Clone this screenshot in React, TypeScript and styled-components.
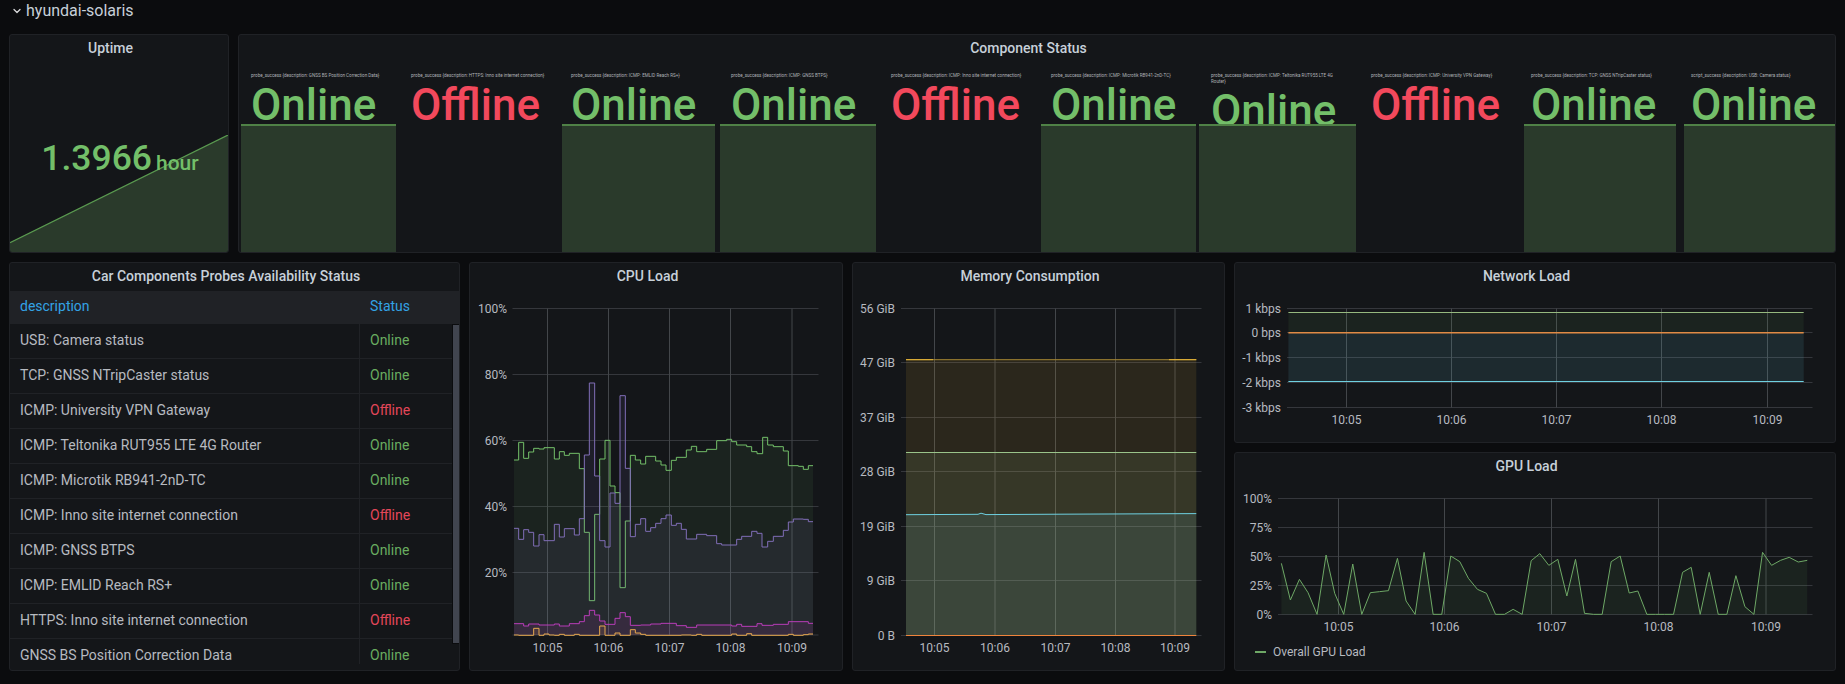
import React from "react";
import styled, { createGlobalStyle } from "styled-components";
import { ChevronDown } from "lucide-react";

type Point = [number, number];

type Series = {
  points: Point[];
  color: string;
  fill?: string;
  fillOpacity?: number;
  base?: number;
  step?: boolean;
  width?: number;
};

type Tick = { label: string; at: number };

type Box = { x: number; y: number; w: number; h: number };

const scaleCpu = (p: Point): Point => [465 + p[0] / 3, 255 + Math.min(p[1], 1141) / 3];
const scaleGpu = (p: Point): Point => [1230 + p[0] / 2.55, 450 + p[1] / 3];

const tiles = [
  { title: "probe_success {description: GNSS BS Position Correction Data}", up: true, barLeft: 0, barWidth: 155 },
  { title: "probe_success {description: HTTPS: Inno site internet connection}", up: false, barLeft: 0, barWidth: 0 },
  { title: "probe_success {description: ICMP: EMLID Reach RS+}", up: true, barLeft: 1, barWidth: 153 },
  { title: "probe_success {description: ICMP: GNSS BTPS}", up: true, barLeft: -1, barWidth: 156 },
  { title: "probe_success {description: ICMP: Inno site internet connection}", up: false, barLeft: 0, barWidth: 0 },
  { title: "probe_success {description: ICMP: Microtik RB941-2nD-TC}", up: true, barLeft: 0, barWidth: 155 },
  { title: "probe_success {description: ICMP: Teltonika RUT955 LTE 4G\nRouter}", up: true, barLeft: -2, barWidth: 157 },
  { title: "probe_success {description: ICMP: University VPN Gateway}", up: false, barLeft: 0, barWidth: 0 },
  { title: "probe_success {description: TCP: GNSS NTripCaster status}", up: true, barLeft: 3, barWidth: 152 },
  { title: "script_success {description: USB: Camera status}", up: true, barLeft: 3, barWidth: 152 },
];

const probes = [
  { name: "USB: Camera status", up: true },
  { name: "TCP: GNSS NTripCaster status", up: true },
  { name: "ICMP: University VPN Gateway", up: false },
  { name: "ICMP: Teltonika RUT955 LTE 4G Router", up: true },
  { name: "ICMP: Microtik RB941-2nD-TC", up: true },
  { name: "ICMP: Inno site internet connection", up: false },
  { name: "ICMP: GNSS BTPS", up: true },
  { name: "ICMP: EMLID Reach RS+", up: true },
  { name: "HTTPS: Inno site internet connection", up: false },
  { name: "GNSS BS Position Correction Data", up: true },
];

const cpuGreen: Point[] = [
  [147, 615], [161, 562], [176, 610], [191, 591], [206, 580], [222, 582], [237, 578], [268, 612], [283, 590], [298, 601],
  [313, 595], [343, 641], [358, 832], [373, 1037], [389, 778], [404, 612], [420, 556], [435, 693], [450, 713], [465, 998],
  [481, 798], [496, 601], [511, 615], [527, 627], [542, 604], [572, 618], [588, 630], [603, 646], [619, 616], [634, 607],
  [664, 585], [679, 574], [695, 590], [725, 583], [755, 557], [785, 553], [800, 560], [815, 570], [845, 575], [860, 590],
  [876, 596], [893, 547], [908, 570], [925, 575], [955, 588], [970, 632], [1000, 634], [1015, 643], [1030, 632], [1044, 632],
];

const cpuPurple: Point[] = [
  [147, 820], [161, 853], [176, 824], [191, 832], [206, 873], [222, 839], [237, 857], [268, 808], [283, 846], [298, 821],
  [328, 840], [343, 791], [358, 600], [373, 384], [389, 663], [404, 857], [420, 876], [435, 714], [450, 745], [465, 422],
  [481, 640], [496, 845], [511, 808], [527, 791], [542, 829], [557, 818], [572, 805], [588, 791], [603, 780], [619, 811],
  [634, 805], [649, 823], [664, 852], [695, 838], [725, 842], [755, 866], [770, 870], [815, 853], [830, 844], [860, 829],
  [876, 835], [891, 876], [908, 859], [925, 844], [955, 826], [970, 801], [985, 792], [1015, 793], [1030, 800], [1044, 800],
];

const cpuMagenta: Point[] = [
  [147, 1106], [176, 1113], [191, 1107], [222, 1110], [268, 1107], [283, 1113], [313, 1106], [343, 1100], [358, 1082],
  [373, 1066], [389, 1080], [404, 1098], [420, 1108], [450, 1090], [465, 1073], [481, 1085], [496, 1111], [527, 1110],
  [557, 1107], [588, 1105], [634, 1112], [664, 1117], [695, 1110], [800, 1113], [815, 1108], [830, 1114], [876, 1106],
  [891, 1111], [925, 1108], [970, 1100], [1030, 1105], [1044, 1105],
];

const cpuOrange: Point[] = [
  [147, 1140], [161, 1145], [206, 1120], [222, 1145], [237, 1137], [252, 1140], [268, 1145], [283, 1138], [298, 1145],
  [328, 1138], [343, 1145], [404, 1113], [420, 1145], [450, 1134], [465, 1145], [496, 1124], [511, 1134], [527, 1138],
  [542, 1145], [649, 1140], [679, 1145], [695, 1138], [710, 1145], [800, 1137], [815, 1145], [845, 1136], [860, 1145],
  [970, 1138], [985, 1145], [1015, 1139], [1030, 1137], [1044, 1137],
];

const gpuLoad: Point[] = [
  [131, 340], [154, 450], [177, 388], [199, 428], [222, 493], [245, 315], [267, 430], [290, 493], [313, 342], [336, 493],
  [358, 428], [381, 425], [404, 422], [427, 325], [449, 453], [472, 493], [495, 307], [518, 493], [540, 493], [563, 318],
  [586, 335], [608, 385], [631, 418], [654, 430], [677, 493], [700, 493], [722, 478], [745, 493], [768, 332], [790, 311],
  [813, 346], [836, 328], [859, 438], [881, 328], [904, 490], [927, 493], [949, 493], [972, 335], [995, 318], [1018, 429],
  [1040, 423], [1063, 493], [1085, 493], [1108, 493], [1131, 493], [1154, 367], [1176, 352], [1199, 493], [1222, 367],
  [1245, 493], [1267, 493], [1290, 377], [1313, 470], [1336, 493], [1358, 307], [1381, 346], [1404, 331], [1426, 322],
  [1449, 336], [1472, 331],
];

function linePath(s: Series) {
  const pts = s.points;
  if (!s.step) return pts.map((p, i) => `${i ? "L" : "M"}${p[0]} ${p[1]}`).join(" ");
  let d = `M${pts[0][0]} ${pts[0][1]}`;
  for (let i = 1; i < pts.length; i++) d += ` H${pts[i][0]} V${pts[i][1]}`;
  return d;
}

function Chart(props: {
  box: Box;
  yTicks: Tick[];
  xTicks: Tick[];
  gridLeft: number;
  gridRight: number;
  labelRight: number;
  xLabelY: number;
  series: Series[];
}) {
  const { box, yTicks, xTicks, gridLeft, gridRight, labelRight, xLabelY, series } = props;
  const top = yTicks[0].at;
  const bottom = yTicks[yTicks.length - 1].at;
  return (
    <ChartSvg width={box.w} height={box.h} viewBox={`${box.x} ${box.y} ${box.w} ${box.h}`}>
      {yTicks.map(t => (
        <g key={t.label}>
          <HorizontalLine x1={gridLeft} x2={gridRight} y1={t.at} y2={t.at} />
          <AxisLabel x={labelRight} y={t.at + 4} textAnchor="end">
            {t.label}
          </AxisLabel>
        </g>
      ))}
      {xTicks.map(t => (
        <g key={t.label}>
          <VerticalLine x1={t.at} x2={t.at} y1={top} y2={bottom} />
          <AxisLabel x={t.at} y={xLabelY} textAnchor="middle">
            {t.label}
          </AxisLabel>
        </g>
      ))}
      {series.map((s, i) => {
        const first = s.points[0];
        const last = s.points[s.points.length - 1];
        const d = linePath(s);
        return (
          <g key={i}>
            {s.fillOpacity && (
              <path
                d={`${d} L${last[0]} ${s.base} L${first[0]} ${s.base} Z`}
                fill={s.fill || s.color}
                fillOpacity={s.fillOpacity}
              />
            )}
            <path d={d} fill="none" stroke={s.color} strokeWidth={s.width || 1} />
          </g>
        );
      })}
    </ChartSvg>
  );
}

function App() {
  return (
    <>
      <GlobalStyle />
      <Page>
        <RowHeader>
          <ChevronDown size={12} strokeWidth={2.6} />
          <RowTitle>hyundai-solaris</RowTitle>
        </RowHeader>
        <TopRow>
          <Panel>
            <PanelTitle>Uptime</PanelTitle>
            <UptimeBody>
              <Sparkline viewBox="0 0 218 117" preserveAspectRatio="none">
                <polygon points="0,107.6 218,0 218,117 0,117" fill="#2a3a2b" />
                <line x1="0" y1="107.6" x2="218" y2="0" stroke="#5a9a50" strokeWidth="1.2" />
              </Sparkline>
              <UptimeValue>
                1.3966<UptimeUnit>hour</UptimeUnit>
              </UptimeValue>
            </UptimeBody>
          </Panel>
          <Panel>
            <PanelTitle>Component Status</PanelTitle>
            <TileGrid>
              {tiles.map(t => (
                <Tile key={t.title}>
                  <TileHead>
                    <TileTitle>{t.title}</TileTitle>
                    <TileValue $up={t.up}>{t.up ? "Online" : "Offline"}</TileValue>
                  </TileHead>
                  {t.up && <TileBar $left={t.barLeft} $width={t.barWidth} />}
                </Tile>
              ))}
            </TileGrid>
          </Panel>
        </TopRow>
        <BottomRow>
          <Panel>
            <PanelTitle>Car Components Probes Availability Status</PanelTitle>
            <TableHead>
              <NameCell>description</NameCell>
              <StatusCell>Status</StatusCell>
            </TableHead>
            <TableBody>
              <TableRows>
                {probes.map(p => (
                  <TableRow key={p.name}>
                    <NameCell>{p.name}</NameCell>
                    <StatusCell $state={p.up ? "up" : "down"}>{p.up ? "Online" : "Offline"}</StatusCell>
                  </TableRow>
                ))}
              </TableRows>
              <ScrollThumb />
            </TableBody>
          </Panel>
          <Panel>
            <PanelTitle>CPU Load</PanelTitle>
            <Chart
              box={{ x: 470, y: 291, w: 372, h: 379 }}
              gridLeft={512.5}
              gridRight={818.5}
              labelRight={507}
              xLabelY={652}
              yTicks={[
                { label: "100%", at: 308.5 },
                { label: "80%", at: 374.5 },
                { label: "60%", at: 440.5 },
                { label: "40%", at: 506.5 },
                { label: "20%", at: 572.5 },
                { label: "", at: 635 },
              ]}
              xTicks={[
                { label: "10:05", at: 547.5 },
                { label: "10:06", at: 608.5 },
                { label: "10:07", at: 669.5 },
                { label: "10:08", at: 730.5 },
                { label: "10:09", at: 792 },
              ]}
              series={[
                { points: cpuGreen.map(scaleCpu), color: "#73bf69", fillOpacity: 0.08, base: 635, step: true },
                { points: cpuPurple.map(scaleCpu), color: "#806eb7", fillOpacity: 0.1, base: 635, step: true },
                { points: cpuMagenta.map(scaleCpu), color: "#b83db8", fillOpacity: 0.12, base: 635, step: true },
                { points: cpuOrange.map(scaleCpu), color: "#e5a84f", fillOpacity: 0.1, base: 635, step: true },
              ]}
            />
          </Panel>
          <Panel>
            <PanelTitle>Memory Consumption</PanelTitle>
            <Chart
              box={{ x: 853, y: 291, w: 371, h: 379 }}
              gridLeft={901}
              gridRight={1201.5}
              labelRight={895}
              xLabelY={652}
              yTicks={[
                { label: "56 GiB", at: 308.5 },
                { label: "47 GiB", at: 362.5 },
                { label: "37 GiB", at: 417.5 },
                { label: "28 GiB", at: 471.5 },
                { label: "19 GiB", at: 526.5 },
                { label: "9 GiB", at: 580.5 },
                { label: "0 B", at: 635.5 },
              ]}
              xTicks={[
                { label: "10:05", at: 934.5 },
                { label: "10:06", at: 995 },
                { label: "10:07", at: 1055.5 },
                { label: "10:08", at: 1115.5 },
                { label: "10:09", at: 1175 },
              ]}
              series={[
                { points: [[906, 359.7], [1196.3, 359.7]], color: "#a58733", fill: "#eab839", fillOpacity: 0.11, base: 635.5 },
                { points: [[906, 359.7], [933, 359.7]], color: "#eab839" },
                { points: [[1169, 359.7], [1196.3, 359.7]], color: "#eab839" },
                { points: [[906, 452.5], [1196.3, 452.5]], color: "#9ac48a", fillOpacity: 0.1, base: 635.5 },
                {
                  points: [[906, 514.7], [978, 514.3], [981, 513.2], [986, 514.6], [1060, 514.2], [1196.3, 513.6]],
                  color: "#6ed0e0",
                  fillOpacity: 0.1,
                  base: 635.5,
                },
                { points: [[906, 635.5], [1196.3, 635.5]], color: "#ef843c" },
              ]}
            />
          </Panel>
          <SideStack>
            <Panel>
              <PanelTitle>Network Load</PanelTitle>
              <Chart
                box={{ x: 1235, y: 291, w: 600, h: 151 }}
                gridLeft={1287}
                gridRight={1812.5}
                labelRight={1281}
                xLabelY={424}
                yTicks={[
                  { label: "1 kbps", at: 308.5 },
                  { label: "0 bps", at: 332.5 },
                  { label: "-1 kbps", at: 357.5 },
                  { label: "-2 kbps", at: 382.5 },
                  { label: "-3 kbps", at: 407.5 },
                ]}
                xTicks={[
                  { label: "10:05", at: 1346.5 },
                  { label: "10:06", at: 1451.5 },
                  { label: "10:07", at: 1556.5 },
                  { label: "10:08", at: 1661.5 },
                  { label: "10:09", at: 1767.5 },
                ]}
                series={[
                  { points: [[1288.4, 312.5], [1803.7, 312.5]], color: "#96b97f", fill: "#73bf69", fillOpacity: 0.08, base: 332.5 },
                  { points: [[1288.4, 381.5], [1803.7, 381.5]], color: "#6ed0e0", fillOpacity: 0.11, base: 332.5 },
                  { points: [[1288.4, 332.7], [1803.7, 332.7]], color: "#e08a45", width: 1.6 },
                ]}
              />
            </Panel>
            <Panel>
              <PanelTitle>GPU Load</PanelTitle>
              <Chart
                box={{ x: 1235, y: 481, w: 600, h: 160 }}
                gridLeft={1278}
                gridRight={1812.5}
                labelRight={1272}
                xLabelY={631}
                yTicks={[
                  { label: "100%", at: 498.5 },
                  { label: "75%", at: 527.5 },
                  { label: "50%", at: 556.5 },
                  { label: "25%", at: 585.5 },
                  { label: "0%", at: 614.5 },
                ]}
                xTicks={[
                  { label: "10:05", at: 1338.5 },
                  { label: "10:06", at: 1444.5 },
                  { label: "10:07", at: 1551.5 },
                  { label: "10:08", at: 1658.5 },
                  { label: "10:09", at: 1766 },
                ]}
                series={[{ points: gpuLoad.map(scaleGpu), color: "#6ea866", fill: "#73bf69", fillOpacity: 0.08, base: 614.5 }]}
              />
              <Legend>
                <LegendLine />
                <LegendLabel>Overall GPU Load</LegendLabel>
              </Legend>
            </Panel>
          </SideStack>
        </BottomRow>
      </Page>
    </>
  );
}

export default App;

const GlobalStyle = createGlobalStyle`
  html, body {
    margin: 0;
    background: #0b0c0e;
    overflow: hidden;
  }
  * {
    box-sizing: border-box;
  }
`;

const Page = styled.div`
  width: 1845px;
  height: 684px;
  padding: 0 9px;
  font-family: Roboto, "Liberation Sans", sans-serif;
  background: #0b0c0e;
`;

const RowHeader = styled.div`
  display: flex;
  align-items: center;
  gap: 3px;
  height: 21px;
  margin-bottom: 13px;
  padding-left: 2px;
  color: #d8d9da;
  svg {
    flex: none;
  }
`;

const RowTitle = styled.span`
  font-size: 16px;
  font-weight: 400;
  color: #c7d0d9;
`;

const TopRow = styled.div`
  display: grid;
  grid-template-columns: 220px 1fr;
  gap: 9px;
  height: 219px;
  margin-bottom: 9px;
`;

const BottomRow = styled.div`
  display: grid;
  grid-template-columns: 451px 374px 373px 1fr;
  gap: 9px;
  height: 409px;
`;

const SideStack = styled.div`
  display: grid;
  grid-template-rows: 181px 1fr;
  gap: 9px;
  min-height: 0;
`;

const Panel = styled.section`
  display: flex;
  flex-direction: column;
  min-width: 0;
  min-height: 0;
  background: #141619;
  border: 1px solid #202226;
  border-radius: 3px;
  overflow: hidden;
`;

const PanelTitle = styled.h2`
  flex: none;
  height: 28px;
  margin: 0;
  padding-right: 17px;
  font-size: 14px;
  font-weight: 500;
  line-height: 27px;
  text-align: center;
  color: #c7d0d9;
`;

const UptimeBody = styled.div`
  position: relative;
  flex: 1;
  display: flex;
  align-items: center;
  justify-content: center;
  padding-left: 2px;
`;

const Sparkline = styled.svg`
  position: absolute;
  left: 0;
  bottom: 0;
  width: 100%;
  height: 117px;
`;

const UptimeValue = styled.div`
  position: relative;
  display: flex;
  align-items: baseline;
  gap: 4px;
  font-size: 35.5px;
  font-weight: 500;
  color: #73bf69;
`;

const UptimeUnit = styled.span`
  font-size: 21px;
`;

const TileGrid = styled.div`
  flex: 1;
  display: grid;
  grid-template-columns: repeat(10, 160px);
  padding-left: 2px;
  min-height: 0;
`;

const Tile = styled.div`
  display: flex;
  flex-direction: column;
  min-width: 0;
`;

const TileHead = styled.div`
  flex: none;
  height: 61px;
  padding: 10px 0 0 10px;
`;

const TileTitle = styled.div`
  font-size: 4.55px;
  line-height: 6px;
  white-space: pre;
  color: #b0b3b8;
`;

const TileValue = styled.div<{ $up: boolean }>`
  margin-top: 6px;
  font-size: 44px;
  font-weight: 500;
  line-height: 40px;
  white-space: nowrap;
  color: ${p => (p.$up ? "#73bf69" : "#f2495c")};
`;

const TileBar = styled.div<{ $left: number; $width: number }>`
  flex: 1;
  width: ${p => p.$width}px;
  margin-left: ${p => p.$left}px;
  background: #2a3a2b;
  border-top: 2px solid #4f8146;
`;

const TableHead = styled.div`
  flex: none;
  display: flex;
  height: 33px;
  align-items: stretch;
  line-height: 31px;
  font-size: 14px;
  color: #33a2e5;
  background: #202226;
`;

const TableBody = styled.div`
  display: flex;
  height: 340px;
  overflow: hidden;
`;

const TableRows = styled.div`
  flex: none;
  width: 442px;
`;

const TableRow = styled.div`
  display: flex;
  height: 35px;
  line-height: 32px;
  font-size: 14px;
  color: #b7bac0;
  border-bottom: 1px solid #202226;
`;

const NameCell = styled.div`
  flex: none;
  width: 350px;
  padding-left: 10px;
  border-right: 1px solid #202226;
  white-space: nowrap;
`;

const StatusCell = styled.div<{ $state?: "up" | "down" }>`
  padding-left: 10px;
  color: ${p => (p.$state === "up" ? "#69ad60" : p.$state === "down" ? "#e4475a" : "inherit")};
`;

const ScrollThumb = styled.div`
  flex: none;
  width: 8px;
  height: 320px;
  background: #41454f;
  border: 1px solid #0b0c0e;
`;

const ChartSvg = styled.svg`
  display: block;
  flex: none;
`;

const HorizontalLine = styled.line`
  stroke: #35373c;
  stroke-width: 1;
`;

const VerticalLine = styled.line`
  stroke: #43464a;
  stroke-width: 1;
`;

const AxisLabel = styled.text`
  font-family: Roboto, "Liberation Sans", sans-serif;
  font-size: 12px;
  fill: #b7bac0;
`;

const Legend = styled.div`
  display: flex;
  align-items: center;
  gap: 7px;
  height: 22px;
  padding-left: 20px;
`;

const LegendLine = styled.span`
  width: 11px;
  height: 2px;
  background: #6ea866;
`;

const LegendLabel = styled.span`
  font-size: 12px;
  color: #b7bac0;
`;
